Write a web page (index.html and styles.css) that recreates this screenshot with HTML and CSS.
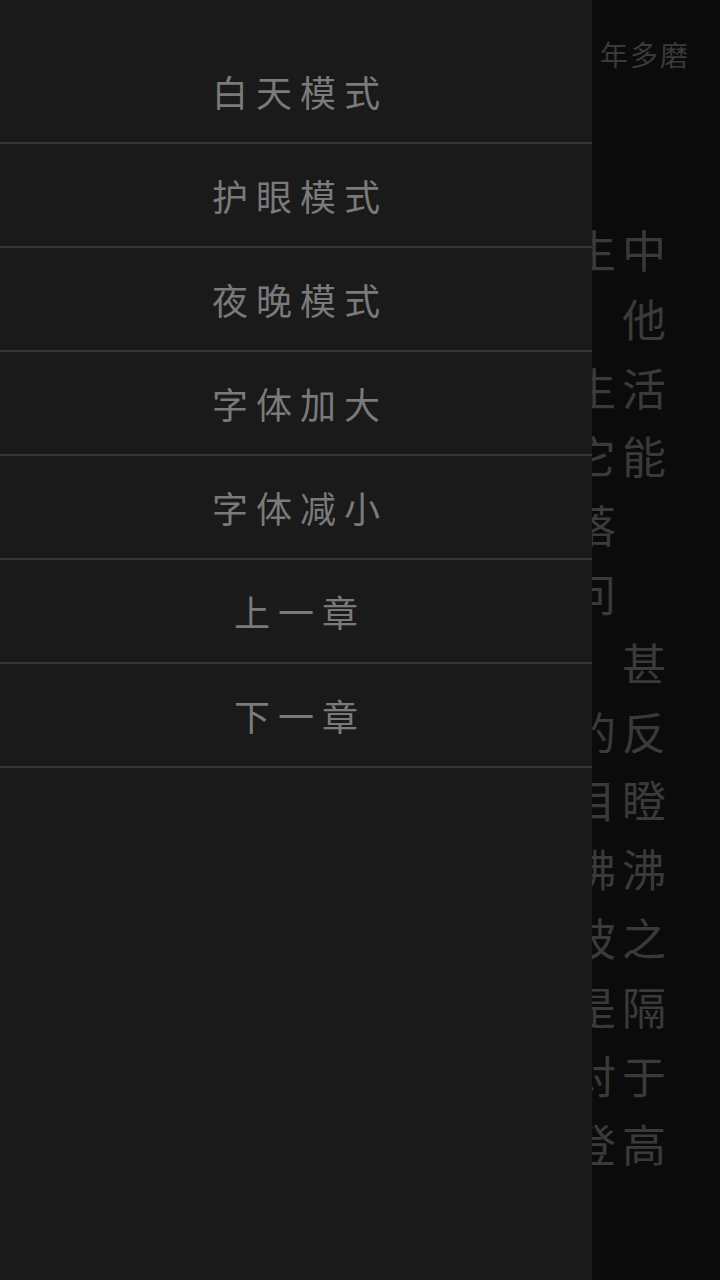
FILE: index.html
```html
<!DOCTYPE html>
<html lang="zh-CN">
<head>
    <meta charset="UTF-8">
    <meta name="viewport" content="width=device-width, initial-scale=1.0">
    <title>阅读</title>
    <link rel="stylesheet" href="styles.css">
</head>
<body>

    <div id="reader">
        <div class="chapter-title">年多磨</div>
        <div class="line">生中</div>
        <div class="line">　他</div>
        <div class="line">生活</div>
        <div class="line">它能</div>
        <div class="line">落　</div>
        <div class="line">问　</div>
        <div class="line">　甚</div>
        <div class="line">的反</div>
        <div class="line">目瞪</div>
        <div class="line">佛沸</div>
        <div class="line">波之</div>
        <div class="line">是隔</div>
        <div class="line">对于</div>
        <div class="line">登高</div>
    </div>

    <div id="menu">
        <div class="menu-item" onclick="setMode('day')">白天模式</div>
        <div class="menu-item" onclick="setMode('eye')">护眼模式</div>
        <div class="menu-item" onclick="setMode('night')">夜晚模式</div>
        <div class="menu-item" onclick="fontSize(2)">字体加大</div>
        <div class="menu-item" onclick="fontSize(-2)">字体减小</div>
        <div class="menu-item" onclick="chapter(-1)">上一章</div>
        <div class="menu-item" onclick="chapter(1)">下一章</div>
    </div>

    <script>
        function setMode(mode) {
            document.body.className = mode;
        }

        function fontSize(step) {
            let lines = document.querySelectorAll(".line");
            for (let line of lines) {
                let size = parseFloat(getComputedStyle(line).fontSize);
                line.style.fontSize = (size + step) + "px";
            }
        }

        function chapter(step) {
            console.log("chapter", step);
        }
    </script>
</body>
</html>
```

FILE: styles.css
```css
/* Czytnik */
body {
    font-family: "Noto Sans CJK SC", "Noto Sans CJK JP", sans-serif;
    background-color: #0b0b0b;
    margin: 0;
    height: 1280px;
    overflow: hidden;
    position: relative;
}

#reader {
    padding-top: 36px;
    color: #3a3a3a;
}

.chapter-title {
    font-size: 28px;
    line-height: 36px;
    letter-spacing: 2px;
    text-align: right;
    white-space: pre;
    padding-right: 30px;
    margin-bottom: 143px;
}

.line {
    font-size: 44px;
    height: 68.8px;
    line-height: 68.8px;
    letter-spacing: 6px;
    text-align: right;
    white-space: pre;
    padding-right: 48px;
}

#menu {
    position: absolute;
    top: 0;
    left: 0;
    width: 592px;
    height: 100%;
    padding-top: 40px;
    box-sizing: border-box;
    background-color: #1a1a1a;
}

.menu-item {
    height: 102px;
    line-height: 102px;
    border-bottom: 2px solid #363636;
    text-align: center;
    font-size: 36px;
    letter-spacing: 8px;
    padding-left: 8px;
    color: #7a7a7a;
    cursor: pointer;
}

.menu-item:active {
    background-color: #222222;
}
```
